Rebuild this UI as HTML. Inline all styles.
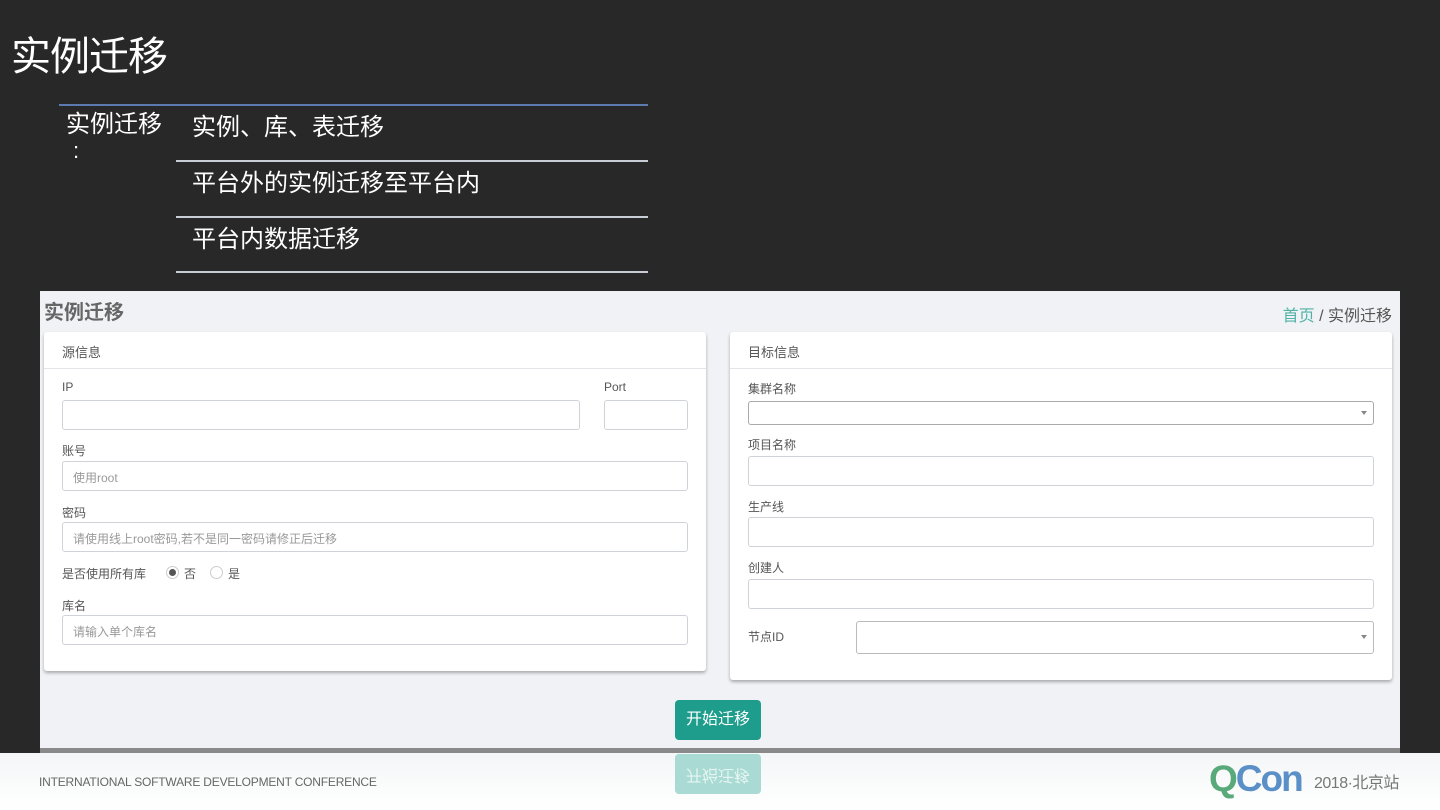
<!DOCTYPE html>
<html><head><meta charset="utf-8"><style>
*{margin:0;padding:0;box-sizing:border-box}
body{width:1440px;height:810px;overflow:hidden;background:#282828;position:relative;font-family:"Liberation Sans","Noto Sans CJK SC",sans-serif}
.a{position:absolute}
.w{color:#fff}
.line{position:absolute;height:2px;background:#c8ccd4}
.panel{position:absolute;left:40px;top:291px;width:1360px;height:457px;background:#f0f2f5}
.card{position:absolute;background:#fff;border-radius:3px;box-shadow:0 2px 3px rgba(0,0,0,.3)}
.ch{height:37px;border-bottom:1px solid #e3e5e8;padding:10px 0 0 18px;font-size:13px;color:#555}
.lb{position:absolute;font-size:12px;color:#555}
.in{position:absolute;height:30px;border:1px solid #cfd3d8;border-radius:3px;background:#fff;font-size:12px;color:#999;padding:7px 0 0 10px}
.car{position:absolute;right:6px;top:11px;width:0;height:0;border-left:3px solid transparent;border-right:3px solid transparent;border-top:4px solid #888}
</style></head><body>
<div class="a w" style="left:11px;top:31px;font-size:40px;line-height:52px;letter-spacing:-1px">实例迁移</div>
<div class="line" style="left:59px;top:104px;width:589px;background:#5b7bb0"></div>
<div class="a w" style="left:66px;top:110px;font-size:24px;line-height:30px">实例迁移</div>
<div class="a w" style="left:73px;top:138px;font-size:22px">:</div>
<div class="a w" style="left:192px;top:113px;font-size:24px;line-height:30px">实例、库、表迁移</div>
<div class="line" style="left:176px;top:160px;width:472px"></div>
<div class="a w" style="left:192px;top:169px;font-size:24px;line-height:30px">平台外的实例迁移至平台内</div>
<div class="line" style="left:176px;top:216px;width:472px"></div>
<div class="a w" style="left:192px;top:225px;font-size:24px;line-height:30px">平台内数据迁移</div>
<div class="line" style="left:176px;top:271px;width:472px"></div>

<div class="panel">
<div class="a" style="left:4px;top:5px;font-size:20px;font-weight:bold;color:#666">实例迁移</div>
<div class="a" style="right:8px;top:11px;font-size:16px;color:#555"><span style="color:#4fb3a5">首页</span> / 实例迁移</div>

<div class="card" style="left:4px;top:41px;width:662px;height:339px">
<div class="ch">源信息</div>
<div class="lb" style="left:18px;top:48px">IP</div>
<div class="lb" style="left:560px;top:48px">Port</div>
<div class="in" style="left:18px;top:68px;width:518px"></div>
<div class="in" style="left:560px;top:68px;width:84px"></div>
<div class="lb" style="left:18px;top:110px">账号</div>
<div class="in" style="left:18px;top:129px;width:626px">使用root</div>
<div class="lb" style="left:18px;top:172px">密码</div>
<div class="in" style="left:18px;top:190px;width:626px">请使用线上root密码,若不是同一密码请修正后迁移</div>
<div class="lb" style="left:18px;top:233px">是否使用所有库</div>
<div class="a" style="left:122px;top:234px;width:13px;height:13px;border:1px solid #ccc;border-radius:50%;background:#fff"><div style="margin:2px;width:7px;height:7px;border-radius:50%;background:#555"></div></div>
<div class="lb" style="left:140px;top:233px">否</div>
<div class="a" style="left:166px;top:234px;width:13px;height:13px;border:1px solid #ccc;border-radius:50%;background:#fff"></div>
<div class="lb" style="left:184px;top:233px">是</div>
<div class="lb" style="left:18px;top:265px">库名</div>
<div class="in" style="left:18px;top:283px;width:626px">请输入单个库名</div>
</div>

<div class="card" style="left:690px;top:41px;width:662px;height:348px">
<div class="ch">目标信息</div>
<div class="lb" style="left:18px;top:48px">集群名称</div>
<div class="in" style="left:18px;top:69px;width:626px;height:24px;border-color:#aaa"><div class="car" style="top:9px"></div></div>
<div class="lb" style="left:18px;top:104px">项目名称</div>
<div class="in" style="left:18px;top:124px;width:626px"></div>
<div class="lb" style="left:18px;top:166px">生产线</div>
<div class="in" style="left:18px;top:185px;width:626px"></div>
<div class="lb" style="left:18px;top:227px">创建人</div>
<div class="in" style="left:18px;top:247px;width:626px"></div>
<div class="lb" style="left:18px;top:296px">节点ID</div>
<div class="in" style="left:126px;top:289px;width:518px;height:33px;border-color:#bbb"><div class="car" style="top:13px"></div></div>
</div>

<div class="a" style="left:635px;top:409px;width:86px;height:40px;background:#1e9c8c;border-radius:4px;color:#fff;font-size:16px;text-align:center;line-height:40px">开始迁移</div>
</div>
<div class="a" style="left:40px;top:748px;width:1360px;height:5px;background:#8a8a8a"></div>
<div class="a" style="left:0;top:753px;width:1440px;height:57px;background:linear-gradient(#f4f6f7,#fff)"></div>
<div class="a" style="left:675px;top:754px;width:86px;height:40px;background:#a9dbd4;border-radius:4px;color:#e6f5f2;font-size:16px;text-align:center;line-height:40px;transform:scaleY(-1)">开始迁移</div>
<div class="a" style="left:39px;top:775px;font-size:12px;color:#666;letter-spacing:-0.2px">INTERNATIONAL SOFTWARE DEVELOPMENT CONFERENCE</div>
<div class="a" style="left:1209px;top:757px;font-size:37px;font-weight:bold;letter-spacing:-2px;line-height:44px"><span style="color:#5aa97a">Q</span><span style="color:#5b8fc7">Con</span></div>
<div class="a" style="left:1314px;top:769px;font-size:16px;color:#777;letter-spacing:-0.5px">2018·北京站</div>
</body></html>
